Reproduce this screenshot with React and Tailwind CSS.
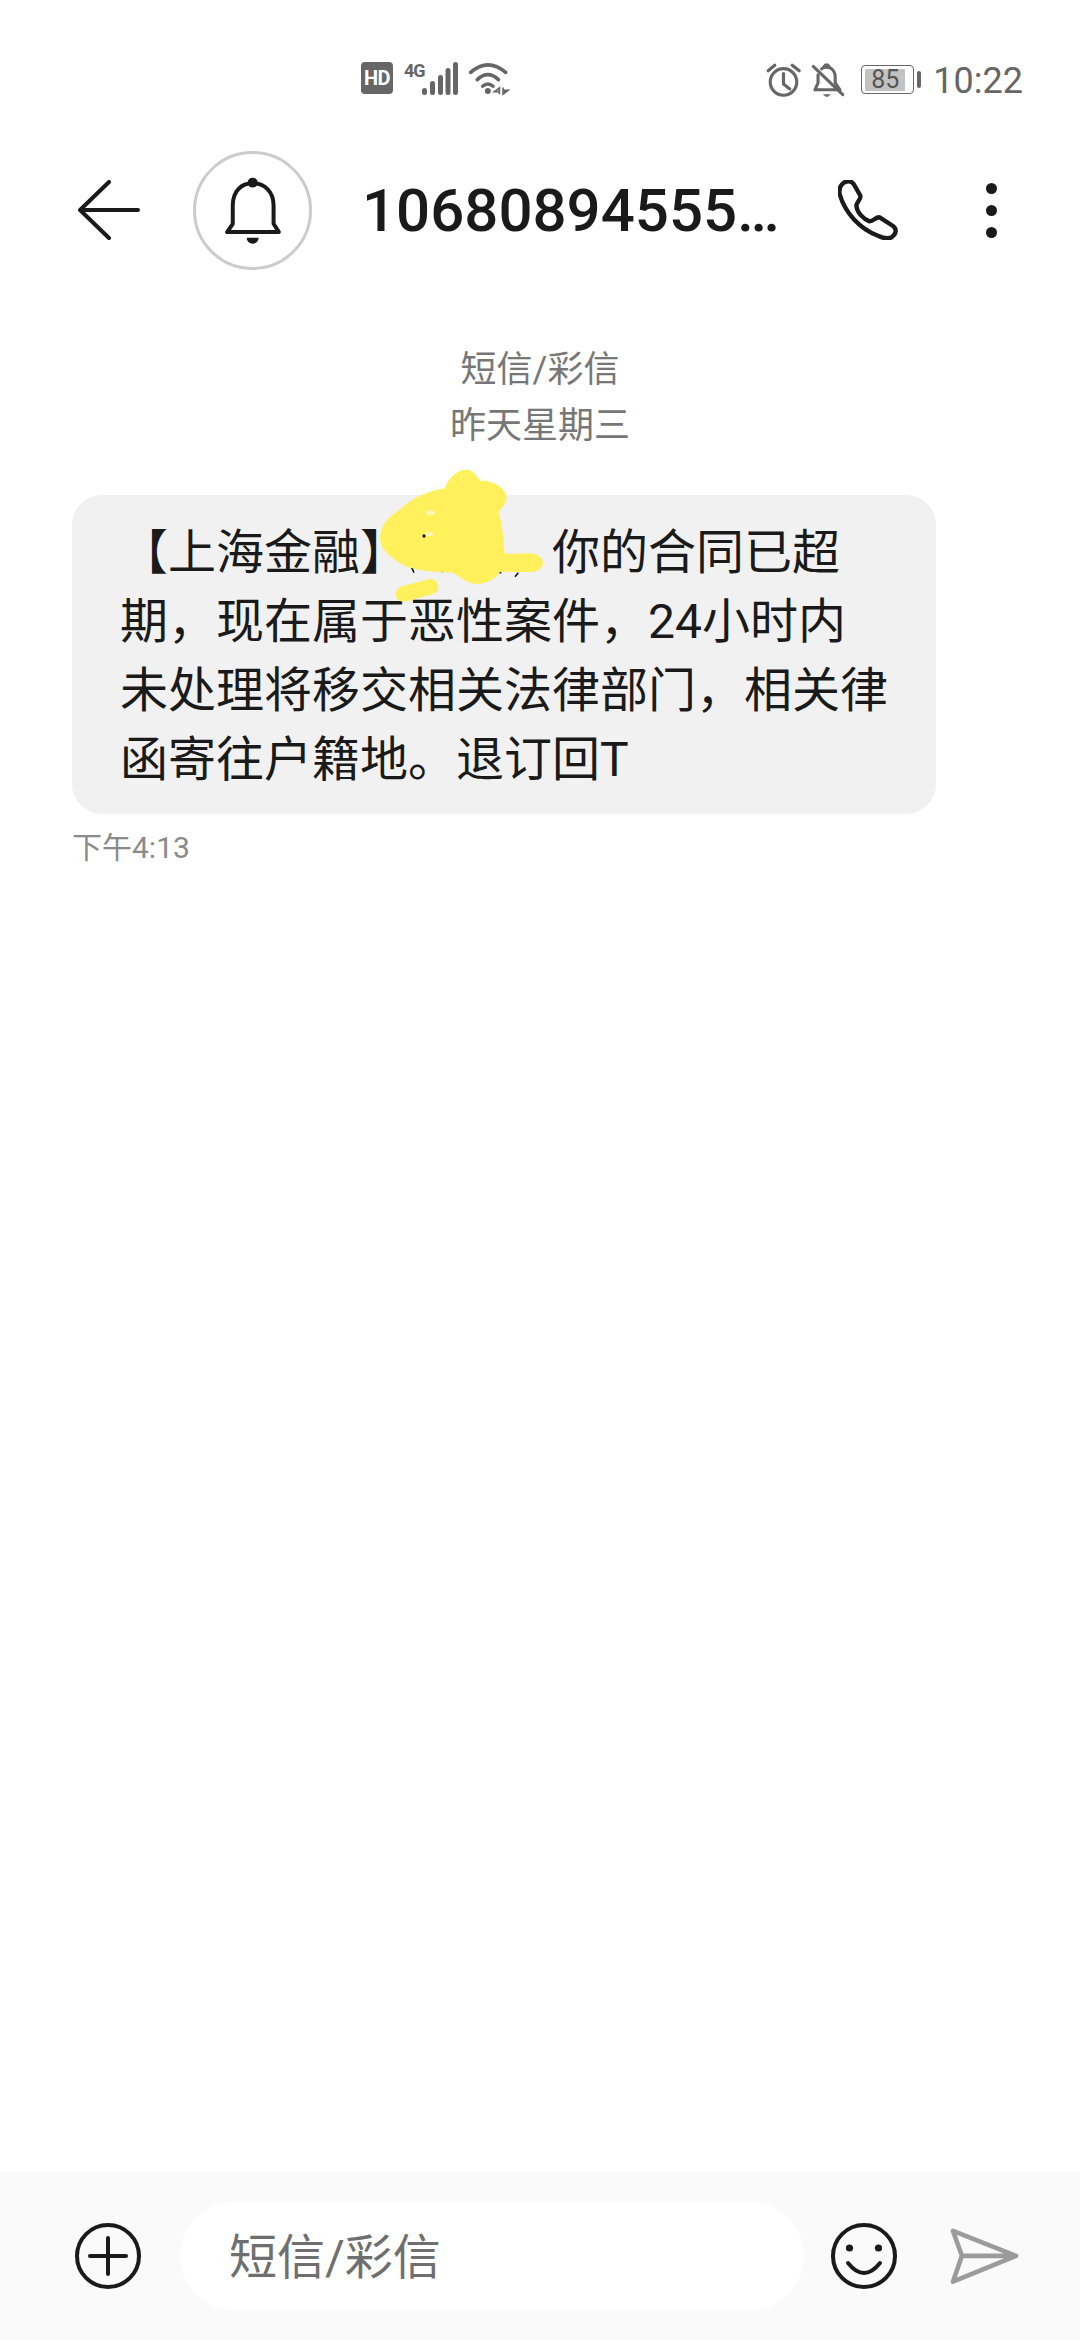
const FONT = 'font-["Roboto","Noto_Sans_CJK_SC",sans-serif]';

function StatusBar() {
  return (
    <div className="flex h-[120px] justify-between pl-[361px] pr-[57px] pt-[62px] text-[#666666]">
      <div className="flex h-[34px] items-start">
        <div className="flex h-[32px] w-[32px] items-center justify-center rounded-[4px] bg-[#666666] text-[20px] font-bold leading-none tracking-[-0.5px] text-white">
          HD
        </div>
        <span className="ml-[11px] w-[18px] text-[18px] font-bold leading-[17px] tracking-[-1px]">4G</span>
        <svg width="36" height="34" viewBox="0 0 36 34" fill="#666666">
          <rect x="0" y="26" width="5" height="7" rx="2.5" />
          <rect x="8" y="19" width="5" height="14" rx="2.5" />
          <rect x="16" y="13" width="5" height="20" rx="2.5" />
          <rect x="23.5" y="6" width="5" height="27" rx="2.5" />
          <rect x="31" y="0" width="5" height="33" rx="2.5" />
        </svg>
        <svg width="43" height="35" viewBox="345 35 130 105" className="ml-[9px]" fill="none" stroke="#666666" strokeWidth="11" strokeLinecap="round">
          <path d="M356 66 Q408 20 462 66" />
          <path d="M376 88 Q408 58 440 88" />
          <path d="M392 108 Q408 94 424 108" strokeWidth="10" />
          <circle cx="408" cy="122" r="9" fill="#666666" stroke="none" />
          <path d="M443 113 L428 124 H443 Z M443 113 V132" strokeWidth="5" strokeLinecap="butt" />
          <path d="M454 112 V132 L470 120 H454" strokeWidth="5" strokeLinecap="butt" fill="#666666" />
        </svg>
      </div>
      <div className="flex h-[34px] items-start">
        <svg width="37" height="35" viewBox="30 35 106 100" fill="none" stroke="#666666" strokeWidth="9" strokeLinecap="round" strokeLinejoin="round">
          <circle cx="83" cy="92" r="38" />
          <path d="M83 68 V98 L101 112" />
          <path d="M39 60 L58 44 M108 44 L128 60" />
        </svg>
        <svg width="34" height="35" viewBox="170 35 98 102" className="ml-[9px]" fill="none" stroke="#666666" strokeWidth="9" strokeLinecap="round" strokeLinejoin="round">
          <path d="M181 116 H254 L240 96 V80 C240 60 228 50 214 50 C208 50 204 52 200 55 M190 72 V96 L181 116" />
          <path d="M208 48 Q215 38 222 48" />
          <path d="M176 48 L262 130" />
          <path d="M207 130 H225 L216 137 Z" fill="#666666" strokeWidth="2" />
        </svg>
        <div className="ml-[16px] mt-[3px] flex h-[29px] w-[53px] items-center rounded-[4px] border border-[#666666] pl-[3px]">
          <div className="flex h-[22px] w-[40px] items-center justify-center bg-[#c2c2c2] text-[25px] leading-none text-[#555555]">85</div>
        </div>
        <div className="ml-[3px] mt-[9px] h-[17px] w-[4px] rounded-[2px] bg-[#666666]" />
        <span className="ml-[12px] mt-[1px] text-[36px] leading-[36px]">10:22</span>
      </div>
    </div>
  );
}

function Header() {
  return (
    <div className="flex h-[180px] items-center pl-[78px] text-[#1a1a1a]">
      <svg width="62" height="60" viewBox="0 0 62 60" fill="none" stroke="#1a1a1a" strokeWidth="4" strokeLinecap="round" strokeLinejoin="round">
        <path d="M31 2 L2 30 L31 58 M2 30 H60" />
      </svg>
      <div className="ml-[53px] flex h-[119px] w-[119px] items-center justify-center rounded-full border-[3px] border-[#cccccc]">
        <svg width="64" height="73" viewBox="510 130 192 220" fill="none" stroke="#1a1a1a" strokeWidth="12" strokeLinejoin="round">
          <path d="M528 305 H684 L668 280 V225 C668 182 640 158 605 158 C570 158 545 182 545 225 V280 Z" />
          <circle cx="605" cy="156" r="15" fill="#1a1a1a" stroke="none" />
          <path d="M587 322 H623 A18 18 0 0 1 587 322 Z" fill="#1a1a1a" stroke="none" />
        </svg>
      </div>
      <div className="ml-[50px] mt-[2px] w-[413px] whitespace-nowrap text-[60px] font-medium leading-none">10680894555…</div>
      <svg width="60" height="60" viewBox="165 88 180 180" className="ml-[63px]" fill="none" stroke="#1a1a1a" strokeWidth="13" strokeLinejoin="round">
        <path d="M178 100 C190 88 205 90 212 100 L232 135 C235 145 222 152 220 165 C222 185 240 205 260 212 C272 212 278 198 290 200 L330 226 C342 235 340 248 328 258 C315 268 300 262 285 255 C230 235 185 185 170 130 C168 118 170 108 178 100 Z" />
      </svg>
      <div className="ml-[88px] flex flex-col gap-[11px]">
        <div className="h-[11px] w-[11px] rounded-full bg-[#1a1a1a]" />
        <div className="h-[11px] w-[11px] rounded-full bg-[#1a1a1a]" />
        <div className="h-[11px] w-[11px] rounded-full bg-[#1a1a1a]" />
      </div>
    </div>
  );
}

function Scribble() {
  return (
    <svg width="240" height="180" viewBox="0 0 720 540" className="absolute left-[340px] top-[450px]">
      <path d="M215 352 L222 368 M305 365 L322 360 M478 368 H484 M525 380 L535 368" stroke="#1a1a1a" strokeWidth="5" />
      <path
        fill="#fff05c"
        d="M120 260 C125 210 165 190 190 170 C230 135 280 120 315 115 C325 80 360 55 385 60 C405 65 415 85 420 92 C460 90 500 115 500 145 C498 165 480 180 475 185 C490 230 490 280 495 312 L570 310 C600 312 612 330 608 345 C600 362 585 368 560 366 L480 365 C470 385 440 400 410 402 C380 400 360 380 340 368 C290 365 230 365 190 345 C150 320 120 300 120 260 Z"
      />
      <path d="M190 432 L272 410" stroke="#fff05c" strokeWidth="46" strokeLinecap="round" />
      <ellipse cx="272" cy="188" rx="14" ry="7" fill="#fbf6b8" />
      <ellipse cx="268" cy="252" rx="14" ry="6" fill="#fbf6b8" />
      <circle cx="252" cy="258" r="5" fill="#1a1a1a" />
    </svg>
  );
}

function Thread() {
  return (
    <div className="flex-1">
      <div className="mt-[42px] text-center text-[36px] leading-[56px] text-[#777777]">
        <div>短信/彩信</div>
        <div>昨天星期三</div>
      </div>
      <div className="ml-[72px] mt-[41px] w-[864px] rounded-[30px] bg-[#f1f1f1] pb-[20px] pl-[48px] pt-[23px] text-[48px] leading-[69px] text-[#1a1a1a]">
        <div className="whitespace-nowrap">
          【上海金融】<span className="inline-block w-[144px]" />你的合同已超
        </div>
        <div className="whitespace-nowrap">期，现在属于恶性案件，24小时内</div>
        <div className="whitespace-nowrap">未处理将移交相关法律部门，相关律</div>
        <div className="whitespace-nowrap">函寄往户籍地。退订回T</div>
      </div>
      <div className="ml-[72px] mt-[14px] text-[30px] leading-[40px] text-[#8a8a8a]">下午4:13</div>
    </div>
  );
}

function Composer() {
  return (
    <div className="flex h-[168px] items-center bg-[#fafafa] pl-[75px]">
      <svg width="66" height="66" viewBox="0 0 66 66" fill="none" stroke="#1a1a1a" strokeWidth="4" strokeLinecap="round">
        <circle cx="33" cy="33" r="31" />
        <path d="M15 33 H51 M33 15 V51" />
      </svg>
      <div className="ml-[39px] flex h-[108px] w-[624px] items-center rounded-full bg-white pl-[49px] pt-[3px] text-[48px] text-[#6f6f6f]">
        短信/彩信
      </div>
      <svg width="66" height="66" viewBox="0 0 66 66" className="ml-[27px]" fill="none" stroke="#1a1a1a" strokeWidth="4" strokeLinecap="round">
        <circle cx="33" cy="33" r="31" />
        <circle cx="18.5" cy="25" r="3.6" fill="#1a1a1a" stroke="none" />
        <circle cx="47.5" cy="25" r="3.6" fill="#1a1a1a" stroke="none" />
        <path d="M17 40 Q33 60 49 40" />
      </svg>
      <svg width="73" height="62" viewBox="565 195 220 185" className="ml-[51px]" fill="none" stroke="#9b9b9b" strokeWidth="14" strokeLinecap="round" strokeLinejoin="round">
        <path d="M580 212 L770 287 L580 365 L607 287 Z M607 287 H770" />
      </svg>
    </div>
  );
}

export default function App() {
  return (
    <div className={`relative flex h-[2340px] w-[1080px] flex-col overflow-hidden bg-white ${FONT}`}>
      <StatusBar />
      <Header />
      <Thread />
      <Composer />
      <Scribble />
    </div>
  );
}
